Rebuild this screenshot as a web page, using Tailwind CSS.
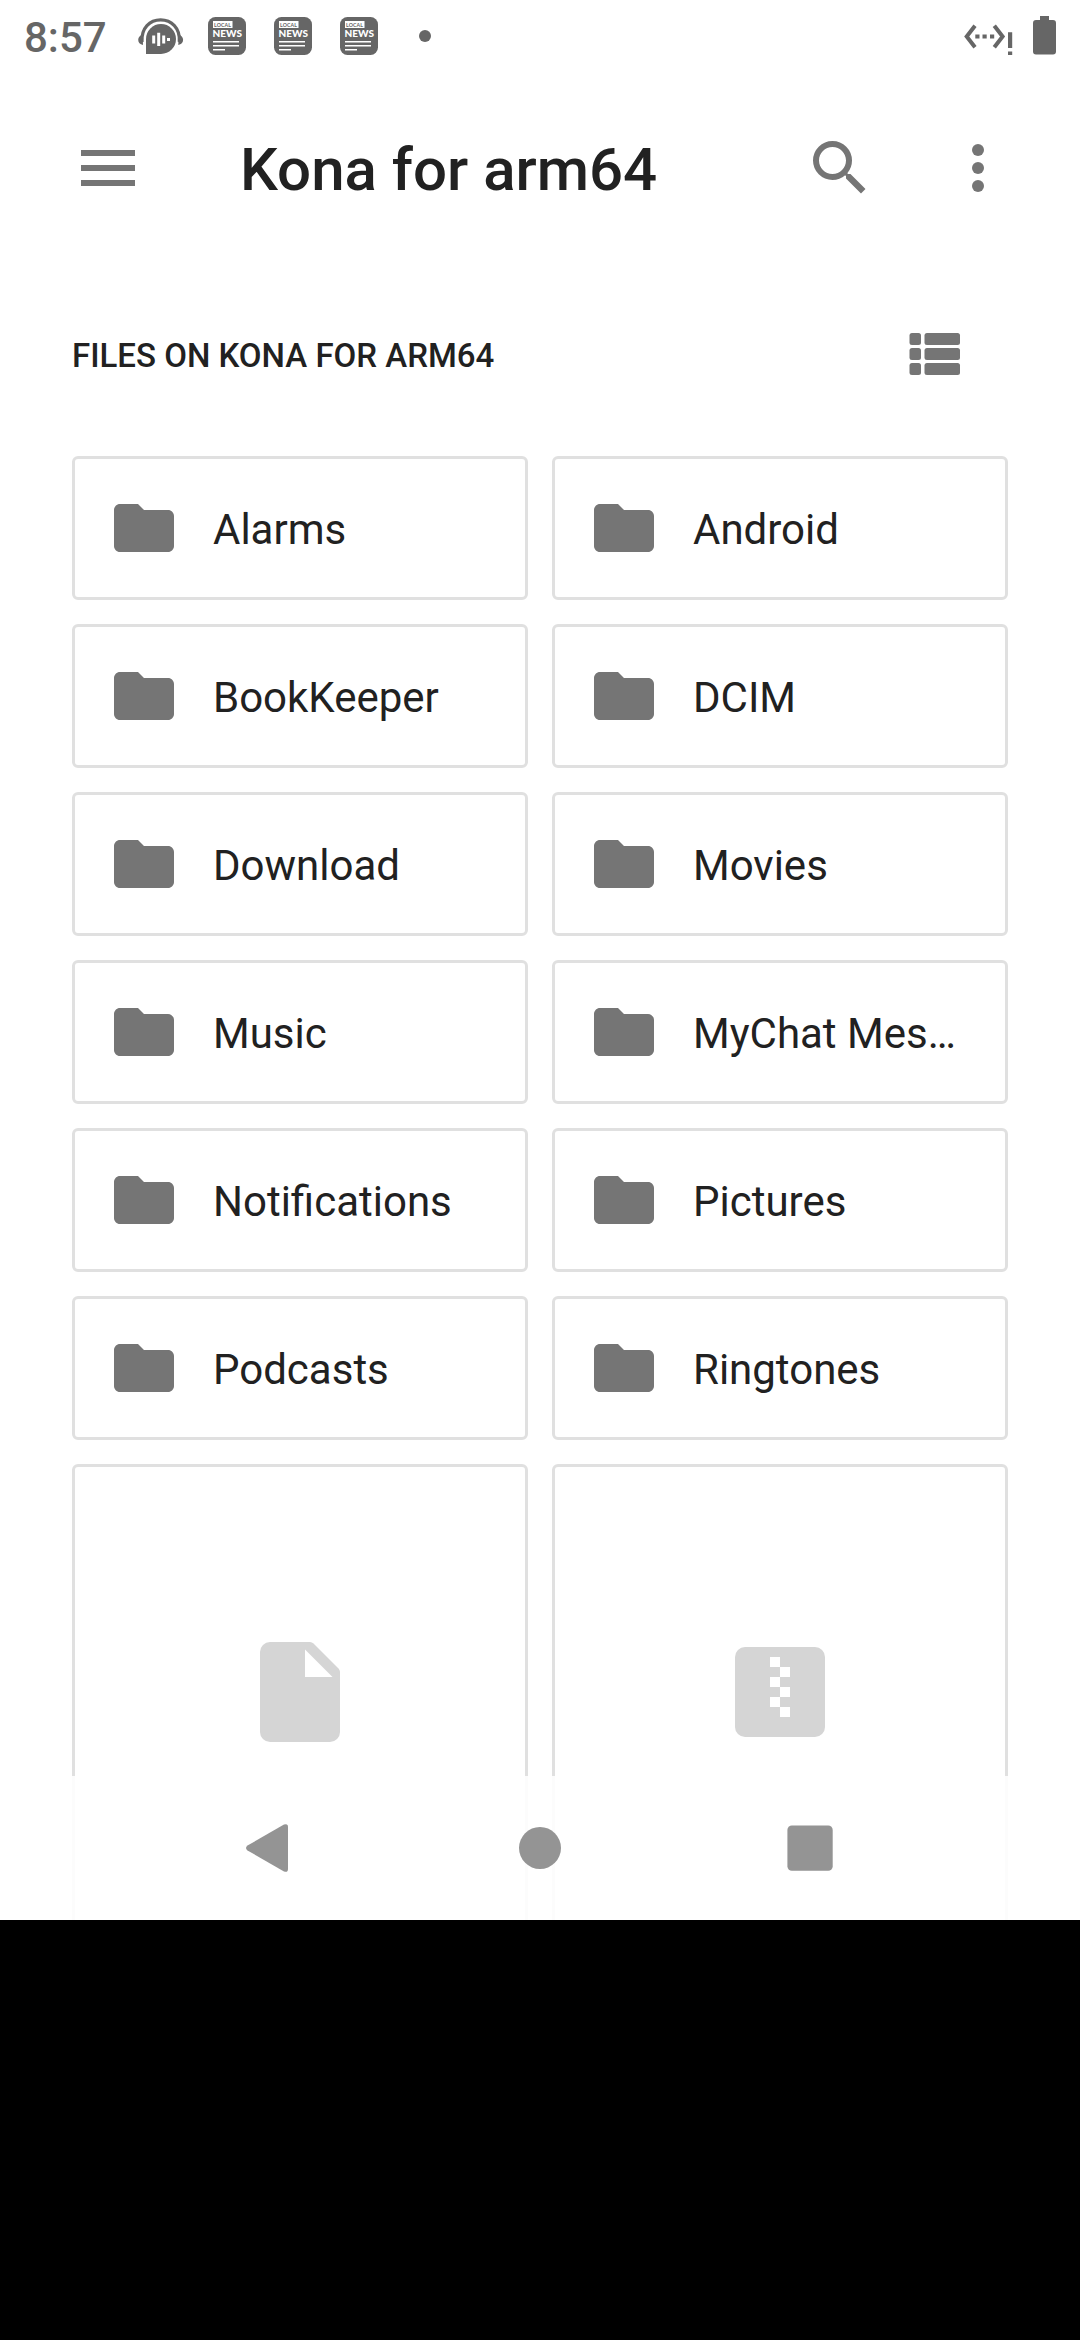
<!DOCTYPE html>
<html lang="en">
<head>
<meta charset="utf-8">
<title>Files</title>
<script src="https://cdn.jsdelivr.net/npm/@tailwindcss/browser@4"></script>
</head>
<body class="h-[2340px] w-[1080px] overflow-hidden bg-black font-['Roboto',sans-serif] text-[#212121]">
<svg class="hidden">
  <symbol id="folder" viewBox="0 0 24 24"><path d="M10 4H4c-1.100 0-2 .9-2 2v12c0 1.100.9 2 2 2h16c1.100 0 2-.9 2-2V8c0-1.100-.9-2-2-2h-8z"/></symbol>
  <symbol id="news" viewBox="0 0 38 38">
    <rect width="38" height="38" rx="7.500" fill="#666"/>
    <rect x="5" y="4" width="19.500" height="7" fill="#fff"/>
    <text x="6" y="9.500" font-size="5.200" font-weight="700" textLength="17" fill="#666" font-family="Lato, sans-serif">LOCAL</text>
    <text x="4.500" y="20.300" font-size="8.800" font-weight="900" textLength="29.500" lengthAdjust="spacingAndGlyphs" fill="#fff" font-family="Lato, sans-serif">NEWS</text>
    <path d="M5 24.700h26M5 28.800h26M5 32.700h12" stroke="#fff" stroke-width="1.500"/>
  </symbol>
</svg>
<main class="relative h-[1920px] overflow-hidden bg-white">
  <div class="flex h-[72px] items-center pl-6 pr-6 text-[#666]">
    <span class="w-[114px] pt-[3px] text-[42px] font-medium leading-[72px]">8:57</span>
    <svg class="h-[38px] w-[46px]" viewBox="0 0 46 38" fill="none">
      <path d="M4 25C3 11 12 2.800 22.600 2.800S42.500 11 41.300 25" stroke="#666" stroke-width="3.200"/>
      <path d="M4.700 17.500 5 28C2 27.500.2 25.500.2 22.800c0-2.500 2-4.800 4.500-5.300zM40.600 17.500 40.300 28c3-.5 4.800-2.500 4.800-5.200 0-2.500-2-4.800-4.500-5.300z" fill="#666"/>
      <path d="M8 37V22a15 15 0 1 1 15 15z" fill="#666"/>
      <path d="M15.700 18.500v8M20.700 15.700v13.300M25.700 18.500v8M30.500 21v3" stroke="#fff" stroke-width="3"/>
    </svg>
    <svg class="ml-6 size-[38px]"><use href="#news"/></svg>
    <svg class="ml-7 size-[38px]"><use href="#news"/></svg>
    <svg class="ml-7 size-[38px]"><use href="#news"/></svg>
    <div class="ml-[41px] size-3 rounded-full bg-[#666]"></div>
    <svg class="ml-auto h-[40px] w-[50px]" viewBox="0 0 50 40">
      <path d="M12 9.800 3.700 20.500l8.300 10.700M31.300 9.800l8.300 10.700-8.300 10.700" fill="none" stroke="#666" stroke-width="4"/>
      <path d="M12.300 18.400h4.200v4.200h-4.200zM19.500 18.400h4.200v4.200h-4.200zM27 18.400h4.200v4.200h-4.200z" fill="#666"/>
      <path d="M45 16.300h4.200v15.700h-4.200zM45 35.500h4.200v3.500h-4.200z" fill="#666"/>
    </svg>
    <svg class="ml-[20px] h-[40px] w-[23px]" viewBox="0 0 23 40"><path d="M7 0h9v4h4a3 3 0 0 1 3 3v28.500a3 3 0 0 1-3 3H3a3 3 0 0 1-3-3V7a3 3 0 0 1 3-3h4z" fill="#666"/></svg>
  </div>

  <header class="flex h-48 items-center px-[72px] text-[#757575]">
    <svg class="size-[72px]" viewBox="0 0 24 24" fill="currentColor"><path d="M3 6h18v2H3zM3 11h18v2H3zM3 16h18v2H3z"/></svg>
    <h1 class="ml-24 flex-1 pt-1 text-[60px] font-medium leading-[72px] text-[#212121]">Kona for arm64</h1>
    <svg class="size-[72px]" viewBox="0 0 24 24" fill="currentColor"><path d="M15.500 14h-.79l-.28-.27A6.470 6.470 0 0 0 16 9.500 6.500 6.500 0 1 0 9.500 16c1.610 0 3.090-.59 4.230-1.570l.27.28v.79l5 4.990L20.490 19l-4.990-5zm-6 0C7.010 14 5 11.990 5 9.500S7.010 5 9.500 5 14 7.010 14 9.500 11.990 14 9.500 14z"/></svg>
    <svg class="-mr-1.5 ml-[66px] size-[72px]" viewBox="0 0 24 24" fill="currentColor"><circle cx="12" cy="6" r="2"/><circle cx="12" cy="12" r="2"/><circle cx="12" cy="18" r="2"/></svg>
  </header>

  <div class="flex h-[180px] items-center justify-between pl-[72px] pr-[108px]">
    <h2 class="pt-1 text-[33px] font-medium leading-10">FILES ON KONA FOR ARM64</h2>
    <svg class="size-[72px] text-[#757575]" viewBox="0 0 72 72" fill="currentColor"><rect x="9.500" y="15" width="11.500" height="12" rx="2.500"/><rect x="24.500" y="15" width="35.500" height="12" rx="2.500"/><rect x="9.500" y="30" width="11.500" height="12" rx="2.500"/><rect x="24.500" y="30" width="35.500" height="12" rx="2.500"/><rect x="9.500" y="45" width="11.500" height="12" rx="2.500"/><rect x="24.500" y="45" width="35.500" height="12" rx="2.500"/></svg>
  </div>

  <section class="mt-3 grid grid-cols-2 gap-6 px-[72px] text-[42px] leading-[60px]">
    <div class="flex h-36 items-center rounded-md border-3 border-[#e0e0e0] pl-[33px] pr-[45px]"><svg class="size-[72px] shrink-0" fill="#757575"><use href="#folder"/></svg><span class="ml-[33px] truncate pt-[3px]">Alarms</span></div>
    <div class="flex h-36 items-center rounded-md border-3 border-[#e0e0e0] pl-[33px] pr-[45px]"><svg class="size-[72px] shrink-0" fill="#757575"><use href="#folder"/></svg><span class="ml-[33px] truncate pt-[3px]">Android</span></div>
    <div class="flex h-36 items-center rounded-md border-3 border-[#e0e0e0] pl-[33px] pr-[45px]"><svg class="size-[72px] shrink-0" fill="#757575"><use href="#folder"/></svg><span class="ml-[33px] truncate pt-[3px]">BookKeeper</span></div>
    <div class="flex h-36 items-center rounded-md border-3 border-[#e0e0e0] pl-[33px] pr-[45px]"><svg class="size-[72px] shrink-0" fill="#757575"><use href="#folder"/></svg><span class="ml-[33px] truncate pt-[3px]">DCIM</span></div>
    <div class="flex h-36 items-center rounded-md border-3 border-[#e0e0e0] pl-[33px] pr-[45px]"><svg class="size-[72px] shrink-0" fill="#757575"><use href="#folder"/></svg><span class="ml-[33px] truncate pt-[3px]">Download</span></div>
    <div class="flex h-36 items-center rounded-md border-3 border-[#e0e0e0] pl-[33px] pr-[45px]"><svg class="size-[72px] shrink-0" fill="#757575"><use href="#folder"/></svg><span class="ml-[33px] truncate pt-[3px]">Movies</span></div>
    <div class="flex h-36 items-center rounded-md border-3 border-[#e0e0e0] pl-[33px] pr-[45px]"><svg class="size-[72px] shrink-0" fill="#757575"><use href="#folder"/></svg><span class="ml-[33px] truncate pt-[3px]">Music</span></div>
    <div class="flex h-36 items-center rounded-md border-3 border-[#e0e0e0] pl-[33px] pr-[45px]"><svg class="size-[72px] shrink-0" fill="#757575"><use href="#folder"/></svg><span class="ml-[33px] truncate pt-[3px]">MyChat Mes…</span></div>
    <div class="flex h-36 items-center rounded-md border-3 border-[#e0e0e0] pl-[33px] pr-[45px]"><svg class="size-[72px] shrink-0" fill="#757575"><use href="#folder"/></svg><span class="ml-[33px] truncate pt-[3px]">Notifications</span></div>
    <div class="flex h-36 items-center rounded-md border-3 border-[#e0e0e0] pl-[33px] pr-[45px]"><svg class="size-[72px] shrink-0" fill="#757575"><use href="#folder"/></svg><span class="ml-[33px] truncate pt-[3px]">Pictures</span></div>
    <div class="flex h-36 items-center rounded-md border-3 border-[#e0e0e0] pl-[33px] pr-[45px]"><svg class="size-[72px] shrink-0" fill="#757575"><use href="#folder"/></svg><span class="ml-[33px] truncate pt-[3px]">Podcasts</span></div>
    <div class="flex h-36 items-center rounded-md border-3 border-[#e0e0e0] pl-[33px] pr-[45px]"><svg class="size-[72px] shrink-0" fill="#757575"><use href="#folder"/></svg><span class="ml-[33px] truncate pt-[3px]">Ringtones</span></div>
    <div class="flex h-[600px] justify-center rounded-md border-3 border-[#e0e0e0] pt-[165px]">
      <svg class="size-[120px]" viewBox="0 0 120 120"><path d="M30 10h40q2 0 3.500 1.500l25 25q1.500 1.500 1.500 3.500v60a10 10 0 0 1-10 10H30a10 10 0 0 1-10-10V20a10 10 0 0 1 10-10z" fill="#d5d5d5"/><path d="M65 17.500V45h27.500z" fill="#fff"/></svg>
    </div>
    <div class="flex h-[600px] justify-center rounded-md border-3 border-[#e0e0e0] pt-[165px]">
      <svg class="size-[120px]" viewBox="0 0 120 120"><rect x="15" y="15" width="90" height="90" rx="10" fill="#d5d5d5"/><path d="M50 25h10v10H50zM60 35h10v10H60zM50 45h10v10H50zM60 55h10v10H60zM50 65h10v10H50zM60 75h10v10H60z" fill="#fff" shape-rendering="crispEdges"/></svg>
    </div>
  </section>

  <nav class="absolute inset-x-0 bottom-0 flex h-36 items-center justify-center bg-white/90">
    <div class="flex w-[270px] justify-center"><svg class="size-[60px]" viewBox="0 0 60 60"><path d="M7.500 27.500 44 6.600q4-1.500 4 2.400v42q0 3.900-4 2.400L7.500 32.500q-3-2.500 0-5z" fill="#949494"/></svg></div>
    <div class="flex w-[270px] justify-center"><div class="size-[42px] rounded-full bg-[#949494]"></div></div>
    <div class="flex w-[270px] justify-center"><svg class="size-[60px]" viewBox="0 0 60 60"><rect x="7.400" y="7.400" width="45.300" height="45.300" rx="4.500" fill="#949494"/></svg></div>
  </nav>
</main>
</body>
</html>
